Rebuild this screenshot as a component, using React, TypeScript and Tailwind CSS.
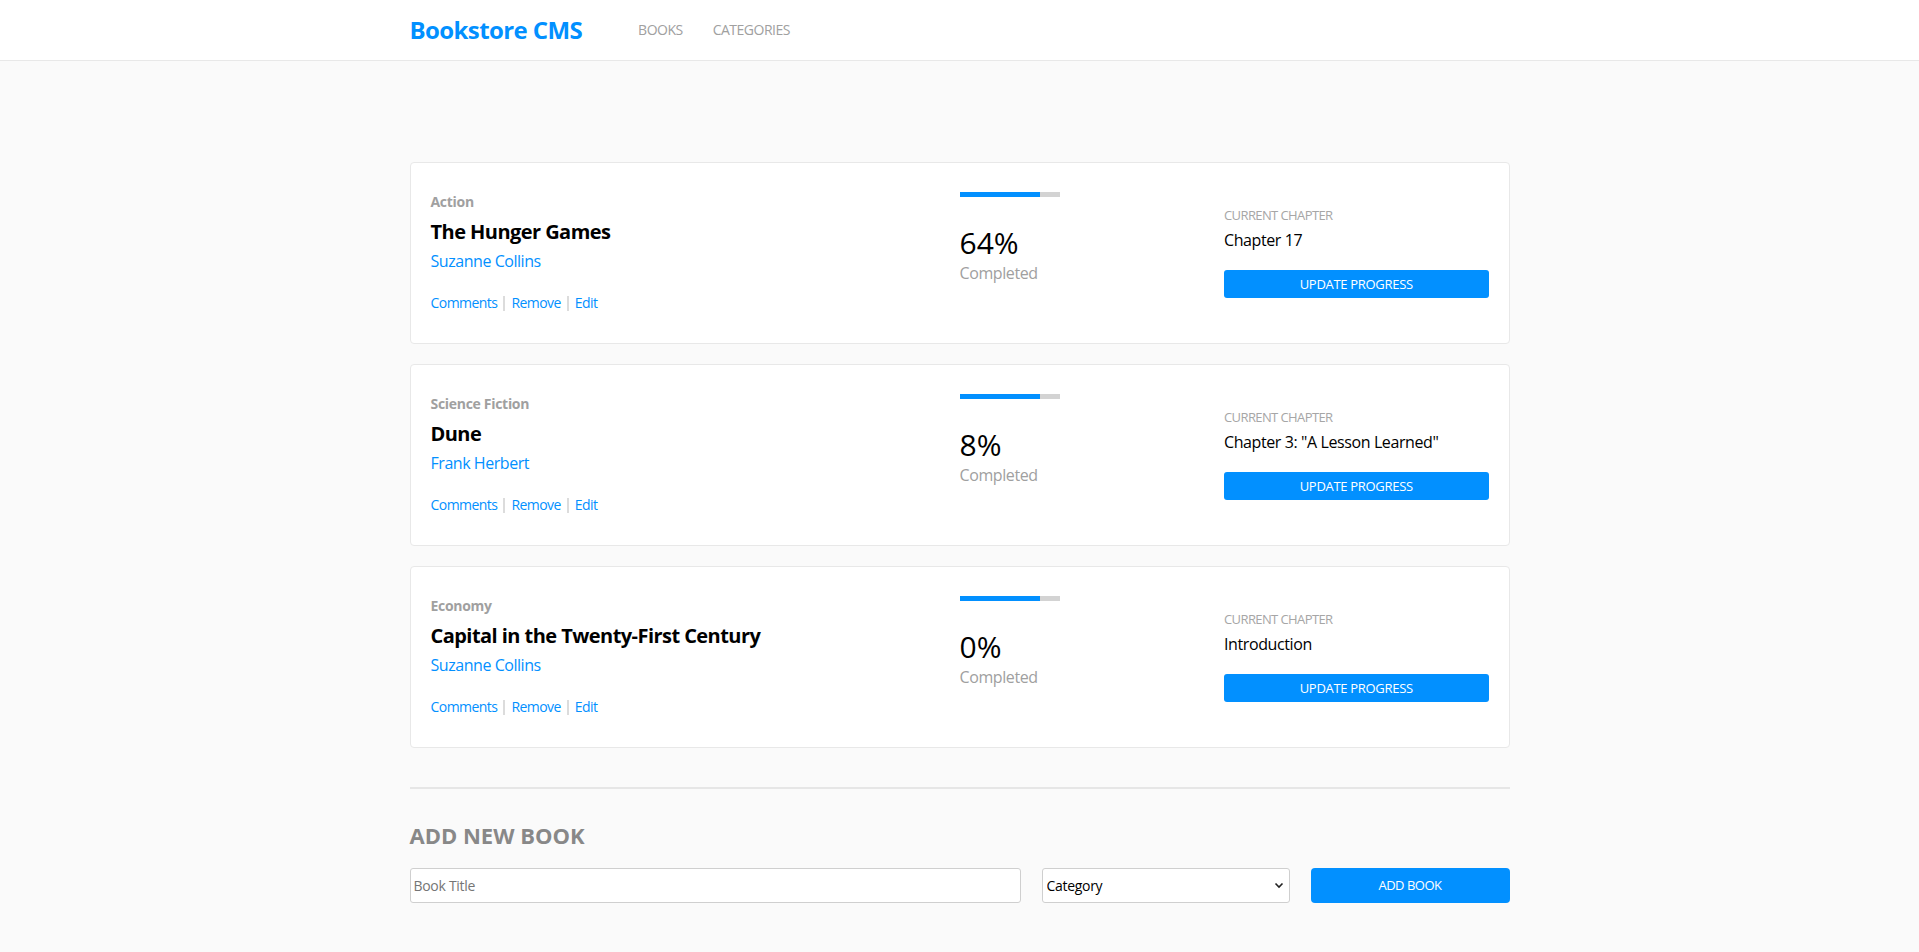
import React from "react";

type Book = {
  category: string;
  title: string;
  author: string;
  percent: number;
  chapter: string;
};

const books: Book[] = [
  { category: "Action", title: "The Hunger Games", author: "Suzanne Collins", percent: 64, chapter: "Chapter 17" },
  { category: "Science Fiction", title: "Dune", author: "Frank Herbert", percent: 8, chapter: 'Chapter 3: "A Lesson Learned"' },
  { category: "Economy", title: "Capital in the Twenty-First Century", author: "Suzanne Collins", percent: 0, chapter: "Introduction" },
];

function Divider() {
  return <span className="mx-[6px] inline-block w-[2px] h-[15px] bg-[#dcdcdc]" />;
}

function BookCard({ book }: { book: Book }) {
  return (
    <div className="bg-white border border-[#e8e8e8] rounded-[4px] px-[20px] pt-[29px] pb-[30px] grid grid-cols-[2fr_1fr_1fr]">
      <div className="flex flex-col">
        <p className="text-[14px] font-bold leading-[20px] tracking-[-0.3px] text-[#a0a0a0]">{book.category}</p>
        <h2 className="mt-[6px] text-[20px] font-bold leading-[28px] tracking-[-0.55px] text-black">{book.title}</h2>
        <p className="mt-[4px] text-[16px] leading-[22px] tracking-[-0.45px] text-[#0290ff]">{book.author}</p>
        <div className="mt-[21px] flex items-center text-[14px] leading-[20px] tracking-[-0.55px] text-[#0290ff]">
          <button className="cursor-pointer">Comments</button>
          <Divider />
          <button className="cursor-pointer">Remove</button>
          <Divider />
          <button className="cursor-pointer">Edit</button>
        </div>
      </div>
      <div className="flex flex-col">
        <div className="w-[100px] h-[5px] bg-[#d3d3d3]">
          <div className="w-[80px] h-full bg-[#0290ff]" />
        </div>
        <p className="mt-[26px] text-[30px] leading-[39px] text-black">{book.percent}%</p>
        <p className="text-[16px] leading-[22px] tracking-[-0.4px] text-[#a0a0a0]">Completed</p>
      </div>
      <div className="flex flex-col pt-[14px]">
        <p className="text-[13px] leading-[18px] tracking-[-0.6px] text-[#a6a6a6]">CURRENT CHAPTER</p>
        <p className="mt-[5px] text-[16px] leading-[22px] tracking-[-0.4px] text-black">{book.chapter}</p>
        <button className="mt-[19px] w-full h-[28px] bg-[#0290ff] rounded-[3px] text-white text-[13px] leading-[28px] tracking-[-0.3px]">
          UPDATE PROGRESS
        </button>
      </div>
    </div>
  );
}

export default function App() {
  return (
    <div className="min-h-screen bg-[#fafafa] font-['Open_Sans',sans-serif]">
      <header className="h-[61px] bg-white border-b border-[#e8e8e8]">
        <div className="w-[1100px] mx-auto h-full flex items-center">
          <h1 className="text-[24px] font-bold leading-[32px] tracking-[-0.6px] text-[#0290ff]">Bookstore CMS</h1>
          <nav className="ml-[56px] flex gap-[30px] text-[14px] leading-[20px] tracking-[-0.5px] text-[#a0a0a0]">
            <a href="#">BOOKS</a>
            <a href="#">CATEGORIES</a>
          </nav>
        </div>
      </header>
      <main className="w-[1100px] mx-auto pt-[101px] pb-[40px]">
        <div className="flex flex-col gap-[20px]">
          {books.map((b) => (
            <BookCard key={b.title} book={b} />
          ))}
        </div>
        <div className="mt-[39px] h-[2px] bg-[#e6e6e6]" />
        <h2 className="mt-[31px] text-[22px] font-bold leading-[30px] text-[#888888]">ADD NEW BOOK</h2>
        <form className="mt-[18px] flex gap-[21px]" onSubmit={(e) => e.preventDefault()}>
          <input
            type="text"
            placeholder="Book Title"
            className="w-[611px] h-[35px] bg-white border border-[#cfcfcf] rounded-[3px] px-[3px] text-[14px] tracking-[-0.3px] text-black placeholder:text-[#757575] outline-none"
          />
          <div className="relative w-[248px] h-[35px]">
            <select className="appearance-none w-full h-full bg-white border border-[#cfcfcf] rounded-[3px] pl-[4px] text-[14px] tracking-[-0.3px] text-black outline-none">
              <option>Category</option>
              <option>Action</option>
              <option>Science Fiction</option>
              <option>Economy</option>
            </select>
            <svg
              className="absolute right-[6px] top-[14px] pointer-events-none"
              width="10"
              height="7"
              viewBox="0 0 10 7"
              fill="none"
            >
              <path d="M1.5 1.5 L5 5 L8.5 1.5" stroke="#222" strokeWidth="1.6" />
            </svg>
          </div>
          <button type="submit" className="w-[199px] h-[35px] bg-[#0290ff] rounded-[4px] text-white text-[13px] tracking-[-0.5px]">
            ADD BOOK
          </button>
        </form>
      </main>
    </div>
  );
}
